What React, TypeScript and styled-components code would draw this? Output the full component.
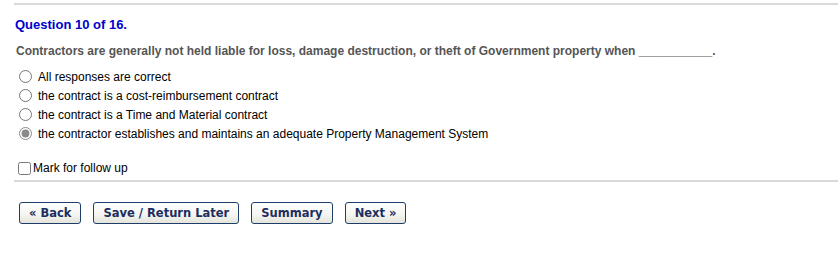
import styled, { createGlobalStyle } from 'styled-components';

const GlobalStyle = createGlobalStyle`
  body {
    margin: 0;
    background: #fff;
    font-family: "Liberation Sans", Arial, sans-serif;
  }
`;

const options = [
  'All responses are correct',
  'the contract is a cost-reimbursement contract',
  'the contract is a Time and Material contract',
  'the contractor establishes and maintains an adequate Property Management System',
];

export default function App() {
  return (
    <>
      <GlobalStyle />
      <Page>
        <Rule />
        <Heading>Question 10 of 16.</Heading>
        <Prompt>
          Contractors are generally not held liable for loss, damage destruction, or theft of Government property when ___________.
        </Prompt>
        <OptionList>
          {options.map((text, i) => (
            <OptionRow key={i}>
              <Radio type="radio" name="answer" defaultChecked={i === 3} />
              {text}
            </OptionRow>
          ))}
        </OptionList>
        <FollowUp>
          <Check type="checkbox" />
          Mark for follow up
        </FollowUp>
        <Rule />
        <ButtonBar>
          <NavButton>« Back</NavButton>
          <NavButton>Save / Return Later</NavButton>
          <NavButton>Summary</NavButton>
          <NavButton>Next »</NavButton>
        </ButtonBar>
      </Page>
    </>
  );
}

const Page = styled.div`
  padding: 3px 0 0 14px;
`;

const Rule = styled.div`
  height: 2px;
  background: #d9d9d9;
`;

const Heading = styled.h2`
  margin: 12px 0 0 1px;
  color: #0000cc;
  font-size: 13px;
  font-weight: bold;
  line-height: 15px;
`;

const Prompt = styled.p`
  margin: 12px 0 0 2px;
  color: #555;
  font-size: 12px;
  font-weight: bold;
  line-height: 14px;
`;

const OptionList = styled.div`
  display: grid;
  margin-top: 9px;
`;

const OptionRow = styled.label`
  display: flex;
  align-items: center;
  height: 19px;
  color: #000;
  font-size: 12px;
`;

const Radio = styled.input`
  width: 13px;
  height: 13px;
  margin: 0 6px 0 5px;
  accent-color: #8a8a8a;
`;

const FollowUp = styled.label`
  display: flex;
  align-items: center;
  margin: 17px 0 4px;
  height: 16px;
  color: #000;
  font-size: 12px;
`;

const Check = styled.input`
  width: 13px;
  height: 13px;
  margin: 0 2px 0 4px;
`;

const ButtonBar = styled.div`
  display: flex;
  gap: 12px;
  padding: 20px 0 0 5px;
`;

const NavButton = styled.button`
  height: 22px;
  padding: 0 9px;
  border: 1px solid #1d3d6b;
  border-radius: 3px;
  background: linear-gradient(180deg, #ffffff 0%, #f4f4f0 60%, #e4e4dc 100%);
  color: #1c2e5e;
  font-family: "DejaVu Sans", Verdana, sans-serif;
  font-size: 11.5px;
  font-weight: bold;
  line-height: 20px;
  cursor: pointer;
`;
